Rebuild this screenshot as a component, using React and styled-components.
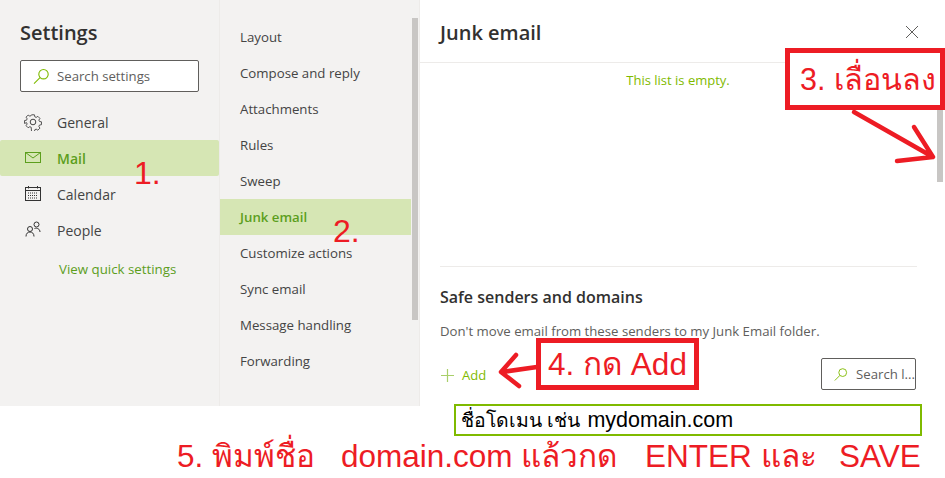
import React from "react";
import styled, { createGlobalStyle } from "styled-components";

const sideItems = [
  { label: "General", icon: "gear" },
  { label: "Mail", icon: "mail", active: true },
  { label: "Calendar", icon: "calendar" },
  { label: "People", icon: "people" },
];

const midItems = [
  "Layout",
  "Compose and reply",
  "Attachments",
  "Rules",
  "Sweep",
  "Junk email",
  "Customize actions",
  "Sync email",
  "Message handling",
  "Forwarding",
];

const Icon = ({ name }) => {
  if (name === "gear") {
    return (
      <svg width="18" height="18" viewBox="0 0 18 18" fill="none" stroke="#444" strokeWidth="1">
        <circle cx="9" cy="9" r="2.8" />
        <path d="M7.4 1h3.2l.4 2.2 1.5.7 1.9-1.2 2.3 2.3-1.2 1.9.7 1.5 2.2.4v3.2l-2.2.4-.7 1.5 1.2 1.9-2.3 2.3-1.9-1.2-1.5.7-.4 2.2H7.4L7 14.9l-1.5-.7-1.9 1.2-2.3-2.3 1.2-1.9-.7-1.5L-.4 10.6V7.4l2.2-.4.7-1.5-1.2-1.9 2.3-2.3 1.9 1.2 1.5-.7z" transform="translate(.9 .9) scale(.9)" />
      </svg>
    );
  }
  if (name === "mail") {
    return (
      <svg width="18" height="18" viewBox="0 0 18 18" fill="none" stroke="#5c9e1d" strokeWidth="1">
        <rect x="1.5" y="3.5" width="15" height="10" />
        <path d="M1.5 3.5 9 9l7.5-5.5" />
      </svg>
    );
  }
  if (name === "calendar") {
    return (
      <svg width="18" height="18" viewBox="0 0 18 18" fill="none" stroke="#333" strokeWidth="1">
        <rect x="1.5" y="2.5" width="15" height="13" />
        <path d="M1.5 5.5h15M4.5 1v2.5M13.5 1v2.5" />
        <path d="M4 8h10M4 10.5h10M4 13h10" strokeDasharray="1 1" />
      </svg>
    );
  }
  return (
    <svg width="18" height="18" viewBox="0 0 18 18" fill="none" stroke="#333" strokeWidth="1">
      <circle cx="12.5" cy="3.5" r="2.5" />
      <circle cx="6" cy="8" r="2.5" />
      <path d="M2 15.5c0-3 1.700-4.500 4-4.500s4 1.500 4 4.500M10.500 7.500c2.500-1 5.500.5 5.500 3.500" />
    </svg>
  );
};

const SearchGlyph = () => (
  <svg width="17" height="17" viewBox="0 0 17 17" fill="none" stroke="#7fba00" strokeWidth="1.1">
    <circle cx="10.5" cy="6.2" r="4.7" />
    <path d="M7 9.7 1 15.7" />
  </svg>
);

const App = () => (
  <Page>
    <GlobalStyle />
    <Panel>
      <Sidebar>
        <Title>Settings</Title>
        <SearchBox $wide>
          <SearchGlyph />
          <span>Search settings</span>
        </SearchBox>
        <SideList>
          {sideItems.map((item) => (
            <SideRow key={item.label} $active={item.active}>
              <IconSlot>
                <Icon name={item.icon} />
              </IconSlot>
              {item.label}
            </SideRow>
          ))}
        </SideList>
        <QuickLink>View quick settings</QuickLink>
        <StepNote $x={134} $y={155}>1.</StepNote>
      </Sidebar>

      <MidColumn>
        {midItems.map((item) => (
          <MidRow key={item} $active={item === "Junk email"}>
            {item}
          </MidRow>
        ))}
        <MidThumb />
        <StepNote $x={113} $y={213}>2.</StepNote>
      </MidColumn>

      <Content>
        <ContentHead>
          <ContentTitle>Junk email</ContentTitle>
          <CloseGlyph viewBox="0 0 14 14">
            <path d="M1 1l12 12M13 1 1 13" />
          </CloseGlyph>
        </ContentHead>
        <EmptyNote>This list is empty.</EmptyNote>
        <Divider />
        <SectionTitle>Safe senders and domains</SectionTitle>
        <SectionText>Don't move email from these senders to my Junk Email folder.</SectionText>
        <AddRow>
          <AddButton>
            <svg width="13" height="13" viewBox="0 0 13 13" stroke="#a9cf6a" strokeWidth="1.2">
              <path d="M6.5 0v13M0 6.5h13" />
            </svg>
            Add
          </AddButton>
          <SearchBox>
            <SearchGlyph />
            <span>Search l...</span>
          </SearchBox>
        </AddRow>
        <ScrollThumb />
      </Content>

      <CalloutBox $x={785} $y={48} $w={160} $h={62} $size={30.5} $shift={6}>
        3. เลื่อนลง
      </CalloutBox>
      <CalloutBox $x={536} $y={338} $w={163} $h={52} $size={31.5}>
        4. กด Add
      </CalloutBox>
      <Arrows viewBox="0 0 945 406">
        <path d="M854 112 933 157M914 127 933 157 897 161" />
        <path d="M537 367 502 372M516 355 501 372 519 386" />
      </Arrows>
    </Panel>

    <Footer>
      <DomainField>
        <ThaiPart>ชื่อโดเมน เช่น</ThaiPart>
        <span>mydomain.com</span>
      </DomainField>
      <FooterNote>
        <span>5. พิมพ์ชื่อ</span>
        <span>domain.com แล้วกด</span>
        <span>ENTER และ</span>
        <span>SAVE</span>
      </FooterNote>
    </Footer>
  </Page>
);

const GlobalStyle = createGlobalStyle`
  html, body {
    margin: 0;
    background: #fff;
  }
  body {
    font-family: "Open Sans", "Noto Sans", sans-serif;
  }
`;

const Page = styled.div`
  width: 945px;
  height: 478px;
  overflow: hidden;
  display: flex;
  flex-direction: column;
  background: #fff;
`;

const Panel = styled.div`
  position: relative;
  height: 406px;
  display: flex;
  flex-shrink: 0;
`;

const Sidebar = styled.div`
  position: relative;
  width: 219px;
  flex-shrink: 0;
  background: #f3f2f1;
  border-right: 1px solid #edebe9;
  display: flex;
  flex-direction: column;
`;

const Title = styled.h1`
  margin: 18px 0 12px 20px;
  font-size: 20px;
  line-height: 30px;
  font-weight: 600;
  color: #323130;
`;

const SearchBox = styled.div`
  display: flex;
  align-items: center;
  gap: ${(p) => (p.$wide ? "7px" : "8px")};
  box-sizing: border-box;
  width: ${(p) => (p.$wide ? "179px" : "95px")};
  height: 32px;
  margin-left: ${(p) => (p.$wide ? "20px" : "0")};
  padding-left: 12px;
  background: #fff;
  border: 1px solid #605e5c;
  border-radius: 2px;
  font-size: 13.2px;
  color: #605e5c;
  white-space: nowrap;
  overflow: hidden;
`;

const SideList = styled.div`
  margin-top: 12px;
  display: flex;
  flex-direction: column;
`;

const SideRow = styled.div`
  height: 36px;
  display: flex;
  align-items: center;
  font-size: 14px;
  border-radius: 2px;
  color: ${(p) => (p.$active ? "#5c9e1d" : "#444")};
  font-weight: ${(p) => (p.$active ? 600 : 400)};
  background: ${(p) => (p.$active ? "#d6e6b4" : "transparent")};
`;

const IconSlot = styled.span`
  width: 57px;
  padding-left: 24px;
  box-sizing: border-box;
  display: flex;
  align-items: center;
`;

const QuickLink = styled.div`
  margin: 11px 0 0 59px;
  font-size: 13.3px;
  line-height: 20px;
  color: #5c9e1d;
`;

const StepNote = styled.div`
  position: absolute;
  left: ${(p) => p.$x}px;
  top: ${(p) => p.$y}px;
  font-family: "Liberation Sans", sans-serif;
  font-size: 32px;
  line-height: 36px;
  color: #ed1c24;
`;

const MidColumn = styled.div`
  position: relative;
  width: 199px;
  flex-shrink: 0;
  background: #f3f2f1;
  border-right: 1px solid #edebe9;
  padding-top: 19px;
`;

const MidRow = styled.div`
  width: 191px;
  height: 36px;
  box-sizing: border-box;
  padding-left: 20px;
  display: flex;
  align-items: center;
  font-size: 13.25px;
  color: ${(p) => (p.$active ? "#5c9e1d" : "#444")};
  font-weight: ${(p) => (p.$active ? 600 : 400)};
  background: ${(p) => (p.$active ? "#d6e6b4" : "transparent")};
`;

const MidThumb = styled.div`
  position: absolute;
  top: 18px;
  left: 192px;
  width: 6px;
  height: 302px;
  background: #c8c6c4;
`;

const Content = styled.div`
  position: relative;
  flex: 1;
  background: #fff;
  display: flex;
  flex-direction: column;
`;

const ContentHead = styled.div`
  height: 63px;
  box-sizing: border-box;
  padding: 0 26px 0 20px;
  display: flex;
  align-items: center;
  justify-content: space-between;
  border-bottom: 1px solid #edebe9;
`;

const ContentTitle = styled.h2`
  margin: 0 0 -3px;
  font-size: 20px;
  font-weight: 600;
  color: #323130;
`;

const CloseGlyph = styled.svg`
  width: 14px;
  height: 14px;
  margin-bottom: -1px;
  fill: none;
  stroke: #605e5c;
  stroke-width: 1;
`;

const EmptyNote = styled.div`
  margin-top: 7px;
  text-align: center;
  padding-right: 9px;
  font-size: 13px;
  line-height: 20px;
  color: #7fba00;
`;

const Divider = styled.div`
  margin: 176px 28px 0 20px;
  height: 1px;
  background: #edebe9;
`;

const SectionTitle = styled.h3`
  margin: 19px 0 0 20px;
  font-size: 16px;
  line-height: 22px;
  font-weight: 600;
  color: #323130;
`;

const SectionText = styled.div`
  margin: 13px 0 0 20px;
  font-size: 13.2px;
  line-height: 20px;
  color: #605e5c;
`;

const AddRow = styled.div`
  margin: 17px 29px 0 21px;
  display: flex;
  align-items: center;
  justify-content: space-between;
`;

const AddButton = styled.div`
  display: flex;
  align-items: center;
  gap: 8px;
  margin-top: 2px;
  font-size: 13px;
  color: #7fba00;
`;

const ScrollThumb = styled.div`
  position: absolute;
  top: 99px;
  right: 2px;
  width: 6px;
  height: 83px;
  background: #c8c6c4;
`;

const CalloutBox = styled.div`
  position: absolute;
  left: ${(p) => p.$x}px;
  top: ${(p) => p.$y}px;
  width: ${(p) => p.$w}px;
  height: ${(p) => p.$h}px;
  box-sizing: border-box;
  border: 5px solid #ed1c24;
  padding-left: ${(p) => p.$shift || 0}px;
  background: #fff;
  display: flex;
  align-items: center;
  justify-content: center;
  font-family: "Liberation Sans", "Noto Sans", sans-serif;
  font-size: ${(p) => p.$size}px;
  color: #ed1c24;
  white-space: nowrap;
`;

const Arrows = styled.svg`
  position: absolute;
  inset: 0;
  width: 945px;
  height: 406px;
  pointer-events: none;
  fill: none;
  stroke: #ed1c24;
  stroke-width: 4.5;
  stroke-linecap: round;
  stroke-linejoin: round;
`;

const Footer = styled.div`
  position: relative;
  flex: 1;
  display: flex;
  flex-direction: column;
`;

const DomainField = styled.div`
  box-sizing: border-box;
  width: 468px;
  height: 32px;
  margin-left: 454px;
  margin-top: -2px;
  padding-left: 5px;
  border: 2px solid #7fba00;
  background: #fff;
  display: flex;
  align-items: center;
  gap: 7px;
  font-family: "Liberation Sans", "Noto Sans", sans-serif;
  font-size: 21.5px;
  color: #000;
  white-space: nowrap;
`;

const ThaiPart = styled.span`
  font-size: 19.4px;
`;

const FooterNote = styled.div`
  margin: 2px 0 0 177px;
  display: grid;
  grid-template-columns: 164px 304px 194px auto;
  font-family: "Liberation Sans", "Noto Sans", sans-serif;
  font-size: 31.5px;
  line-height: 36px;
  color: #ed1c24;
  white-space: nowrap;
`;

export default App;
